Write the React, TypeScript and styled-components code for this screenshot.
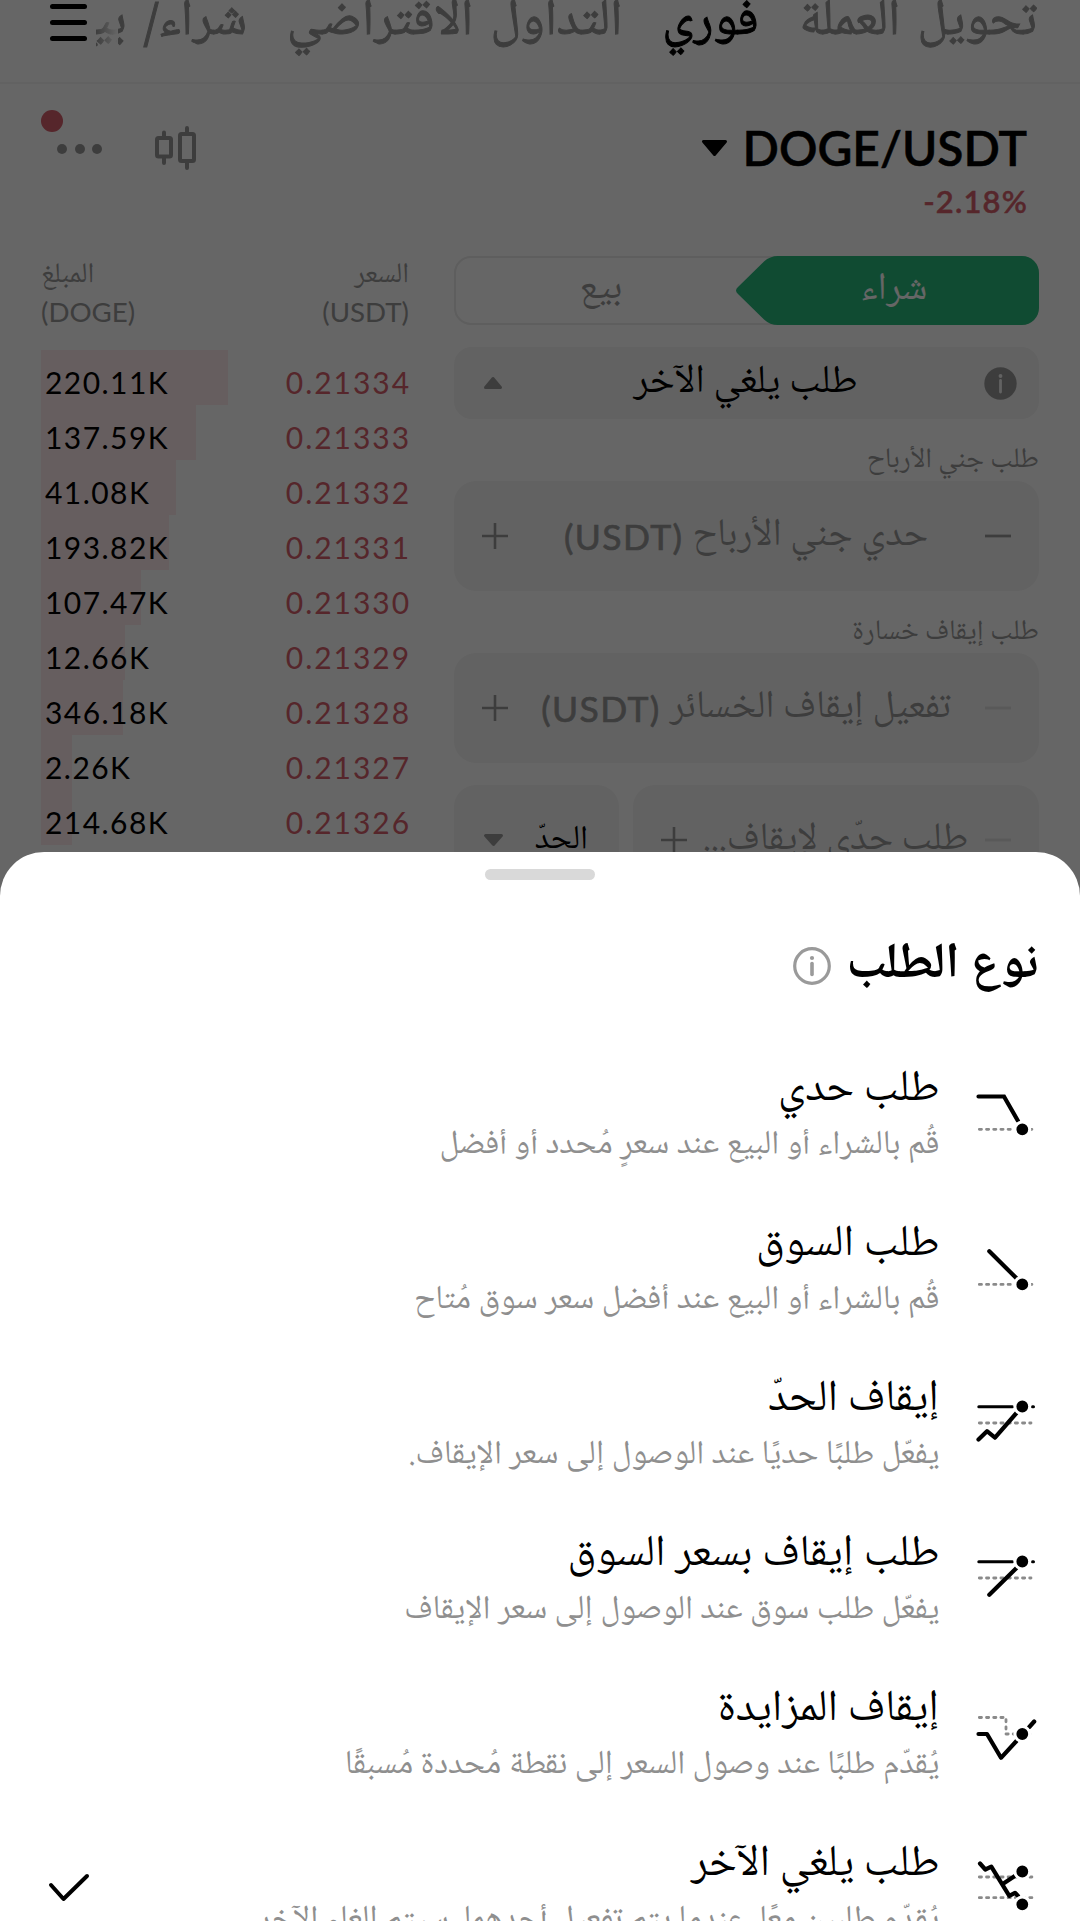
import React from 'react';
import styled, { createGlobalStyle } from 'styled-components';

const arabic = "'Noto Naskh Arabic UI', 'Noto Naskh Arabic', 'DejaVu Sans', sans-serif";
const latin = "Lato, 'Open Sans', sans-serif";
const muted = '#9a9a9a';
const field = '#f5f5f5';
const red = '#d65f6c';
const green = '#2abb7d';

const GlobalStyle = createGlobalStyle`
  * { box-sizing: border-box; }
  body { margin: 0; background: #fff; font-family: ${arabic}; color: #000; }
  svg { display: block; flex: none; overflow: visible; }
`;

const Screen = styled.div`
  position: relative;
  width: 1080px;
  height: 1921px;
  overflow: hidden;
  direction: rtl;
  background: #fff;
`;

const TopBar = styled.header`
  display: flex;
  align-items: flex-start;
  height: 84px;
  padding: 0 43px 0 50px;
  border-bottom: 2px solid #f5f5f5;
`;

const Tabs = styled.nav`
  flex: 1;
  display: flex;
  gap: 40px;
  min-width: 0;
  height: 82px;
  margin-left: 9px;
  overflow: hidden;
  -webkit-mask-image: linear-gradient(to right, #000, transparent 22px, #000 22px);
`;

const Tab = styled.span<{ $active?: boolean }>`
  flex: none;
  font-size: 51px;
  line-height: 64px;
  margin-top: -11px;
  word-spacing: 6px;
  white-space: nowrap;
  color: ${(p) => (p.$active ? '#000' : muted)};
  -webkit-text-stroke: 1px ${(p) => (p.$active ? '#000' : muted)};
`;

const MenuButton = styled.div`
  flex: none;
  width: 37px;
  padding-top: 4px;
  display: flex;
  flex-direction: column;
  gap: 11.5px;
`;

const MenuLine = styled.i`
  height: 4.5px;
  border-radius: 3px;
  background: #000;
`;

const PairBar = styled.section`
  display: flex;
  justify-content: space-between;
  height: 181px;
  padding: 35px 53px 0 41px;
`;

const Pair = styled.div`
  display: flex;
  flex-direction: column;
  align-items: flex-start;
`;

const PairName = styled.div`
  display: flex;
  align-items: center;
  gap: 16px;
  font: 600 47.9px/58px ${latin};
  -webkit-text-stroke: 0.5px #000;
`;

const Change = styled.div`
  font: 600 31px/42px ${latin};
  letter-spacing: 1.15px;
  margin: 3px -1px 0 0;
  direction: ltr;
  color: ${red};
  -webkit-text-stroke: 0.4px ${red};
`;

const Tools = styled.div`
  display: flex;
  gap: 52px;
  height: 60px;
`;

const MoreButton = styled.div`
  position: relative;
  width: 62px;
`;

const Dots = styled.div`
  display: flex;
  gap: 7.5px;
  padding: 24.5px 0 0 0;
  margin-left: 16px;
  justify-content: flex-end;
`;

const Dot = styled.i`
  width: 10px;
  height: 10px;
  border-radius: 50%;
  background: ${muted};
`;

const Alert = styled.i`
  position: absolute;
  left: 0;
  top: -9px;
  width: 22px;
  height: 22px;
  border-radius: 50%;
  background: ${red};
`;

const Columns = styled.main`
  display: flex;
  gap: 45px;
  padding: 0 41px;
`;

const Form = styled.section`
  width: 585px;
  margin-top: -9px;
  display: flex;
  flex-direction: column;
`;

const Toggle = styled.div`
  display: flex;
  height: 69px;
  border-radius: 17px;
  border: 2px solid #eaeaea;
`;

const BuySide = styled.div`
  position: relative;
  width: 303px;
  height: 69px;
  margin: -2px -2px 0 0;
  padding-left: 32px;
  text-align: center;
  font-size: 38.5px;
  line-height: 66px;
  color: #fff;
`;

const BuyShape = styled.svg`
  position: absolute;
  inset: 0;
`;

const BuyText = styled.span`
  position: relative;
  margin-right: 19px;
`;

const SellSide = styled.div`
  flex: 1;
  padding-left: 10px;
  text-align: center;
  font-size: 38.5px;
  line-height: 61px;
  color: ${muted};
`;

const Select = styled.div`
  display: flex;
  align-items: center;
  justify-content: space-between;
  height: 72px;
  margin-top: 22px;
  padding: 0 22px 0 30px;
  border-radius: 18px;
  background: ${field};
  font-size: 39.7px;
`;

const SelectText = styled.span`
  line-height: 60px;
  margin: -2px 0 0 5px;
`;

const Label = styled.div`
  height: 62px;
  padding-top: 20px;
  font-size: 28.3px;
  line-height: 42px;
  color: ${muted};
`;

const Input = styled.div`
  display: flex;
  align-items: center;
  height: 110px;
  padding: 0 28px;
  border-radius: 22px;
  background: ${field};
  color: ${muted};
`;

const Hint = styled.span`
  flex: 1;
  display: flex;
  align-items: center;
  justify-content: center;
  gap: 9px;
  font-size: 38.7px;
  line-height: 60px;
  white-space: nowrap;
  margin: -3px 0 0 -1px;
`;

const Unit = styled.bdi`
  direction: ltr;
  font: 400 35.5px/60px ${latin};
  letter-spacing: 1.4px;
  -webkit-text-stroke: 0.7px ${muted};
  padding-top: 4px;
`;

const SplitRow = styled.div`
  display: flex;
  gap: 14px;
  margin-top: 22px;
`;

const WideInput = styled(Input)`
  width: 406px;
`;

const KindSelect = styled(Input)`
  width: 165px;
  padding: 0 31px 0 30px;
  justify-content: space-between;
  font-size: 33.5px;
  color: #000;
`;

const KindText = styled.span`
  line-height: 60px;
  margin-top: -1px;
`;

const Book = styled.section`
  flex: 1;
`;

const BookHead = styled.div`
  display: flex;
  justify-content: space-between;
  height: 85px;
  color: ${muted};
`;

const HeadCell = styled.div<{ $end?: boolean }>`
  display: flex;
  flex-direction: column;
  align-items: ${(p) => (p.$end ? 'flex-end' : 'flex-start')};
  font-size: 28.4px;
  line-height: 38px;
  margin-top: -9px;
`;

const HeadUnit = styled.bdi`
  direction: ltr;
  font: 400 27.7px/36px ${latin};
`;

const BookRow = styled.div`
  display: flex;
  justify-content: space-between;
  height: 55px;
  font: 400 30px/65px ${latin};
  letter-spacing: 1.95px;
`;

const Price = styled.span`
  direction: ltr;
  margin-right: -2px;
  color: ${red};
`;

const Amount = styled.span`
  position: relative;
  direction: ltr;
  width: 187px;
  padding-left: 4px;
  letter-spacing: 1.45px;
`;

const Depth = styled.i`
  position: absolute;
  left: 0;
  top: 0;
  height: 55px;
  background: #ffebee;
`;

const AmountText = styled.span`
  position: relative;
`;

const Scrim = styled.div`
  position: absolute;
  inset: 0;
  background: rgba(0, 0, 0, 0.6);
`;

const Sheet = styled.section`
  position: absolute;
  left: 0;
  right: 0;
  top: 852px;
  bottom: 0;
  display: flex;
  flex-direction: column;
  border-radius: 44px 44px 0 0;
  background: #fff;
`;

const Handle = styled.i`
  flex: none;
  align-self: center;
  width: 110px;
  height: 11px;
  margin-top: 17px;
  border-radius: 6px;
  background: #d9d9d9;
`;

const SheetTitle = styled.h2`
  flex: none;
  display: flex;
  align-items: center;
  gap: 15px;
  height: 80px;
  margin: 45px 0 0;
  padding-right: 41.5px;
  font-size: 49.8px;
  font-weight: 700;
  line-height: 78px;
`;

const InfoIcon = styled.svg`
  margin-top: 2px;
`;

const Options = styled.ul`
  display: flex;
  flex-direction: column;
  margin: 0;
  padding: 48px 44px 0 49px;
  list-style: none;
`;

const Option = styled.li`
  flex: none;
  display: flex;
  height: 155px;
`;

const OptionIcon = styled.svg`
  margin-top: 33px;
`;

const OptionText = styled.div`
  flex: 1;
  margin: 5px 36.5px 0 0;
  white-space: nowrap;
`;

const OptionName = styled.div`
  font-size: 44px;
  line-height: 62px;
`;

const OptionNote = styled.div`
  font-size: 33.4px;
  line-height: 50px;
  color: #8f8f8f;
`;

const Check = styled.svg`
  margin-top: 46px;
`;

const Triangle = ({ w, h, up, color = muted }: { w: number; h: number; up?: boolean; color?: string }) => (
  <svg width={w} height={h} viewBox={`0 0 ${w} ${h}`}>
    <path
      d={up ? `M${w / 2} 1.5L${w - 1.5} ${h - 1.5}H1.5Z` : `M1.5 1.5H${w - 1.5}L${w / 2} ${h - 1.5}Z`}
      fill={color}
      stroke={color}
      strokeWidth="3"
      strokeLinejoin="round"
    />
  </svg>
);

const Plus = () => (
  <svg width="26" height="26" viewBox="0 0 26 26">
    <path d="M13 0V26M0 13H26" stroke={muted} strokeWidth="2.6" />
  </svg>
);

const Minus = ({ faint }: { faint?: boolean }) => (
  <svg width="26" height="26" viewBox="0 0 26 26">
    <path d="M0 13H26" stroke={faint ? '#dedede' : muted} strokeWidth="2.8" />
  </svg>
);

const dash = { stroke: '#8a8a8a', strokeWidth: 2.8, strokeDasharray: '2.2 5', strokeLinecap: 'round' as const, fill: 'none' };
const line = { stroke: '#000', strokeWidth: 4.2, strokeLinecap: 'round' as const, strokeLinejoin: 'round' as const, fill: 'none' };
const thin = { ...line, strokeWidth: 3 };

const Node = ({ y }: { y: number }) => (
  <circle cx="46.3" cy={y} r="7.4" fill="#000" stroke="#fff" strokeWidth="3" />
);

const glyphs: Record<string, React.ReactNode> = {
  limit: (
    <>
      <path {...dash} d="M3.3 43.3H58" />
      <path {...line} strokeLinejoin="miter" d="M2.5 10.5H28L42 35" />
      <Node y={43.3} />
    </>
  ),
  market: (
    <>
      <path {...dash} d="M3.3 43.4H58" />
      <path {...line} d="M13.3 10.3L40.5 37.3" />
      <Node y={43.4} />
    </>
  ),
  stopLimit: (
    <>
      <path {...dash} d="M3.3 27H55" />
      <path {...thin} d="M2.8 10.7H36.5M56.5 10.7H57.5" />
      <path {...line} d="M2.5 43.5L11 35.2L19 41.7L40.5 17" />
      <Node y={10.5} />
    </>
  ),
  stopMarket: (
    <>
      <path {...dash} d="M3.3 27H55" />
      <path {...thin} d="M2.8 10.7H36.5M56.5 10.7H57.5" />
      <path {...line} d="M13.3 43.7L40.5 17" />
      <Node y={10.5} />
    </>
  ),
  trailing: (
    <>
      <path {...dash} d="M3.3 11.5H30V28H58" />
      <path {...line} d="M2.5 28H11L25 51.8L40.5 35M53.3 21L58.2 15.5" />
      <Node y={28} />
    </>
  ),
  oco: (
    <>
      <path {...dash} d="M3.3 16H58M3.3 36.7H58" />
      <path {...line} d="M4 2.5L9.3 8.5L15.3 5.7L33.3 34.8L39 31.8L42 35M26.7 23L38.8 15" />
      <Node y={10.5} />
      <Node y={43.3} />
    </>
  ),
};

const options = [
  { icon: 'limit', name: 'طلب حدي', note: 'قُم بالشراء أو البيع عند سعرٍ مُحدد أو أفضل' },
  { icon: 'market', name: 'طلب السوق', note: 'قُم بالشراء أو البيع عند أفضل سعر سوق مُتاح' },
  { icon: 'stopLimit', name: 'إيقاف الحدّ', note: 'يفعّل طلبًا حديًا عند الوصول إلى سعر الإيقاف.' },
  { icon: 'stopMarket', name: 'طلب إيقاف بسعر السوق', note: 'يفعّل طلب سوق عند الوصول إلى سعر الإيقاف' },
  { icon: 'trailing', name: 'إيقاف المزايدة', note: 'يُقدّم طلبًا عند وصول السعر إلى نقطة مُحددة مُسبقًا' },
  { icon: 'oco', name: 'طلب يلغي الآخر', note: 'يُقدّم طلبين معًا، عندما يتم تفعيل أحدهما، سيتم إلغاء الآخر', selected: true },
];

const rows: [string, string, number][] = [
  ['0.21334', '220.11K', 187],
  ['0.21333', '137.59K', 155],
  ['0.21332', '41.08K', 135],
  ['0.21331', '193.82K', 128],
  ['0.21330', '107.47K', 100],
  ['0.21329', '12.66K', 84],
  ['0.21328', '346.18K', 82],
  ['0.21327', '2.26K', 31],
  ['0.21326', '214.68K', 31],
];

export default function App() {
  return (
    <Screen>
      <GlobalStyle />
      <TopBar>
        <Tabs>
          <Tab>تحويل العملة</Tab>
          <Tab $active>فوري</Tab>
          <Tab>التداول الاقتراضي</Tab>
          <Tab>شراء/ بيع</Tab>
        </Tabs>
        <MenuButton>
          <MenuLine />
          <MenuLine />
          <MenuLine />
        </MenuButton>
      </TopBar>

      <PairBar>
        <Pair>
          <PairName>
            <bdi>DOGE/USDT</bdi>
            <Triangle w={25} h={16} color="#000" />
          </PairName>
          <Change>-2.18%</Change>
        </Pair>
        <Tools>
          <svg width="42" height="48" viewBox="0 0 42 48">
            <g fill="none" stroke={muted} strokeWidth="4" strokeLinecap="round" transform="translate(0 4)">
              <rect x="2" y="15" width="14" height="18.5" rx="1.5" />
              <rect x="25" y="11" width="14" height="27" rx="1.5" />
              <path d="M9 9.5V14M9 35V40M32 5V10M32 39V45" />
            </g>
          </svg>
          <MoreButton>
            <Dots>
              <Dot />
              <Dot />
              <Dot />
            </Dots>
            <Alert />
          </MoreButton>
        </Tools>
      </PairBar>

      <Columns>
        <Form>
          <Toggle>
            <BuySide>
              <BuyShape width="303" height="69" viewBox="0 0 303 69">
                <path
                  d="M286 0H42Q34 0 28 5.5L2 31Q-2 34.5 2 38L28 63.5Q34 69 42 69H286A17 17 0 0 0 303 52V17A17 17 0 0 0 286 0Z"
                  fill={green}
                />
              </BuyShape>
              <BuyText>شراء</BuyText>
            </BuySide>
            <SellSide>بيع</SellSide>
          </Toggle>
          <Select>
            <svg width="33" height="33" viewBox="0 0 33 33">
              <circle cx="16.5" cy="16.5" r="16.2" fill={muted} />
              <path d="M16.5 13.5V25" stroke={field} strokeWidth="2.8" strokeLinecap="round" />
              <circle cx="16.5" cy="9" r="1.9" fill={field} />
            </svg>
            <SelectText>طلب يلغي الآخر</SelectText>
            <Triangle w={18} h={12} up />
          </Select>
          <Label>طلب جني الأرباح</Label>
          <Input>
            <Minus />
            <Hint>
              حدي جني الأرباح <Unit>(USDT)</Unit>
            </Hint>
            <Plus />
          </Input>
          <Label>طلب إيقاف خسارة</Label>
          <Input>
            <Minus faint />
            <Hint>
              تفعيل إيقاف الخسائر <Unit>(USDT)</Unit>
            </Hint>
            <Plus />
          </Input>
          <SplitRow>
            <WideInput>
              <Minus faint />
              <Hint>طلب حدّي لإيقاف...</Hint>
              <Plus />
            </WideInput>
            <KindSelect>
              <KindText>الحدّ</KindText>
              <Triangle w={19} h={12} />
            </KindSelect>
          </SplitRow>
        </Form>

        <Book>
          <BookHead>
            <HeadCell>
              السعر
              <HeadUnit>(USDT)</HeadUnit>
            </HeadCell>
            <HeadCell $end>
              المبلغ
              <HeadUnit>(DOGE)</HeadUnit>
            </HeadCell>
          </BookHead>
          {rows.map(([price, amount, depth]) => (
            <BookRow key={price}>
              <Price>{price}</Price>
              <Amount>
                <Depth style={{ width: depth }} />
                <AmountText>{amount}</AmountText>
              </Amount>
            </BookRow>
          ))}
        </Book>
      </Columns>

      <Scrim />

      <Sheet>
        <Handle />
        <SheetTitle>
          نوع الطلب
          <InfoIcon width="38" height="38" viewBox="0 0 38 38">
            <circle cx="19" cy="19" r="17.3" fill="none" stroke={muted} strokeWidth="3.2" />
            <path d="M19 16.5V27.5" stroke={muted} strokeWidth="3.6" strokeLinecap="round" />
            <circle cx="19" cy="11" r="2.1" fill={muted} />
          </InfoIcon>
        </SheetTitle>
        <Options>
          {options.map((o) => (
            <Option key={o.icon}>
              <OptionIcon width="60" height="60" viewBox="0 0 60 60">
                {glyphs[o.icon]}
              </OptionIcon>
              <OptionText>
                <OptionName>{o.name}</OptionName>
                <OptionNote>{o.note}</OptionNote>
              </OptionText>
              {o.selected && (
                <Check width="40" height="28" viewBox="0 0 40 28">
                  <path d="M2 11L14.5 25L38 2" fill="none" stroke="#000" strokeWidth="4" strokeLinecap="round" strokeLinejoin="round" />
                </Check>
              )}
            </Option>
          ))}
        </Options>
      </Sheet>
    </Screen>
  );
}
